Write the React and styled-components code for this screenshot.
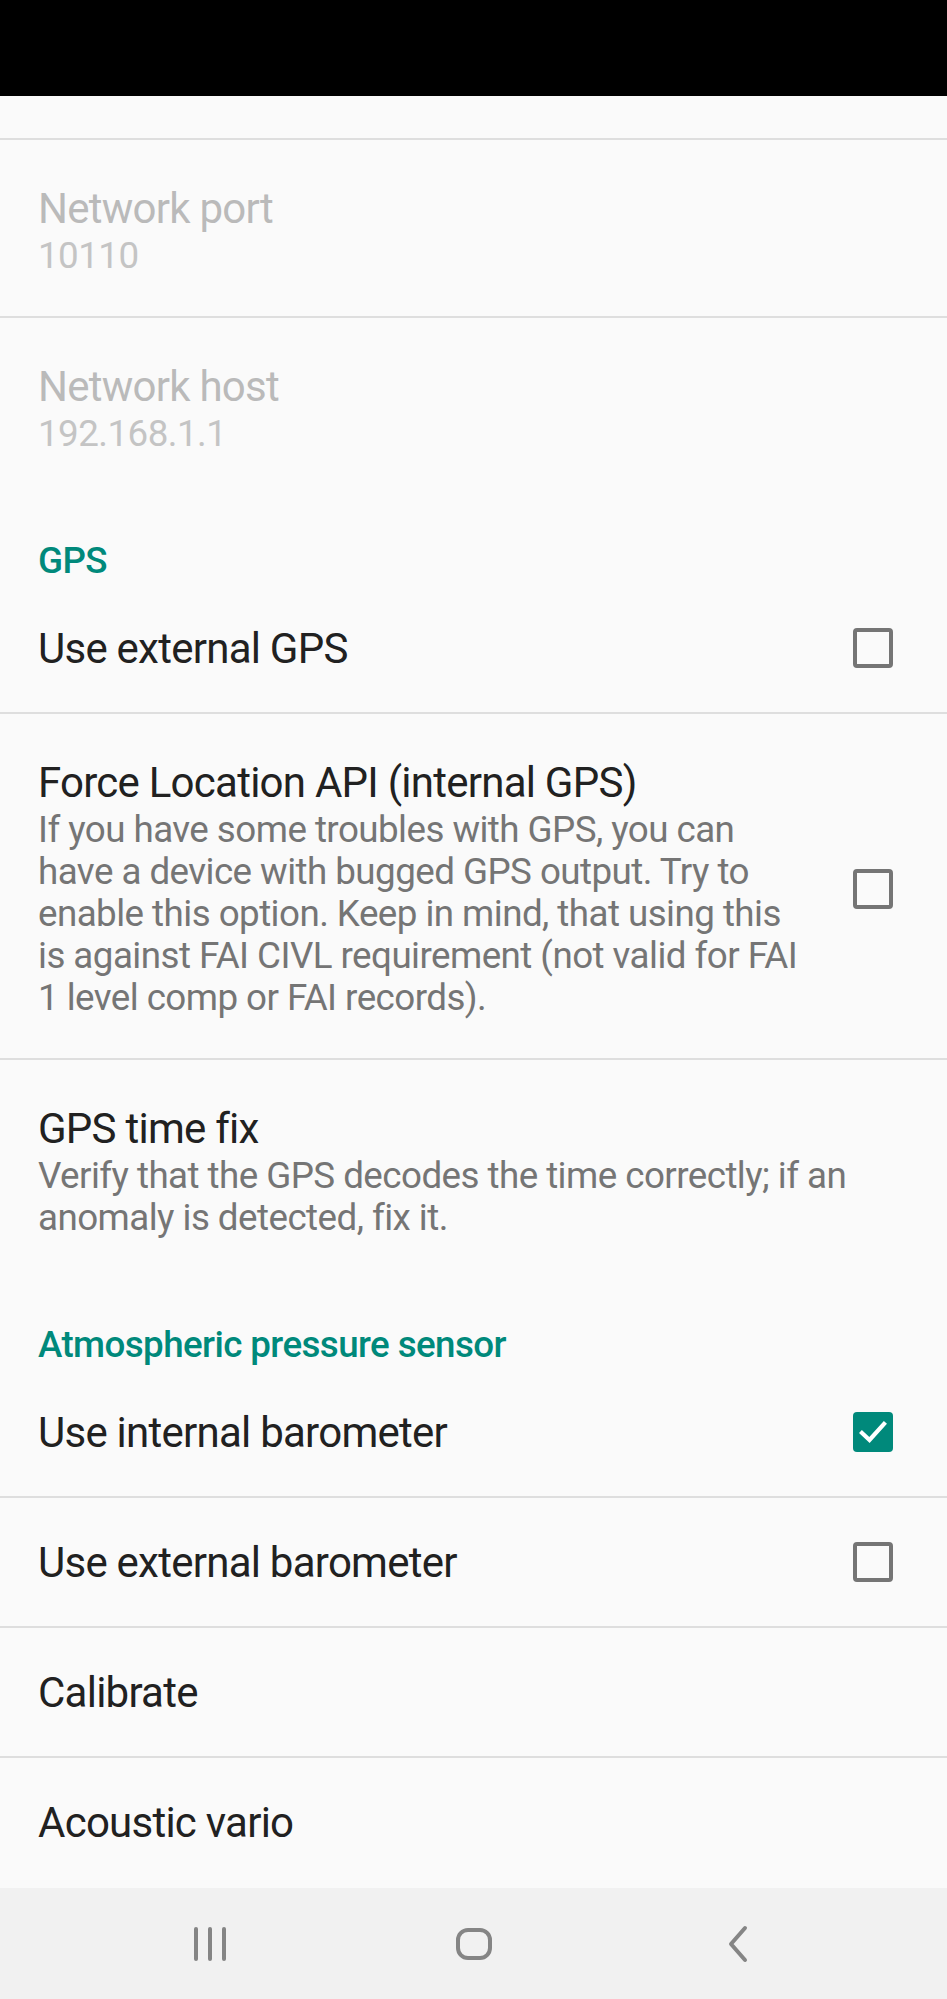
import styled, { createGlobalStyle } from "styled-components";

const GlobalStyle = createGlobalStyle`
  html, body {
    margin: 0;
    padding: 0;
    background: #fafafa;
    font-family: Roboto, "Noto Sans", "Liberation Sans", sans-serif;
  }
`;

const Screen = styled.div`
  width: 947px;
  height: 1999px;
  display: flex;
  flex-direction: column;
  background: #fafafa;
  overflow: hidden;
`;

const StatusBar = styled.div`
  height: 96px;
  background: #000;
  flex-shrink: 0;
`;

const List = styled.div`
  flex: 1;
  display: flex;
  flex-direction: column;
`;

const Tail = styled.div`
  height: 42px;
  border-bottom: 2px solid #dedede;
`;

const Row = styled.div`
  display: flex;
  align-items: center;
  padding: ${({ $tall }) => ($tall ? "44px 54px 39px 38px" : "0 54px 0 38px")};
  height: ${({ $tall }) => ($tall ? "auto" : "128px")};
  border-bottom: ${({ $divider }) => ($divider ? "2px solid #dedede" : "none")};
`;

const Texts = styled.div`
  flex: 1;
  min-width: 0;
`;

const Title = styled.div`
  font-size: 42px;
  line-height: 49px;
  letter-spacing: -0.75px;
  color: ${({ $disabled }) => ($disabled ? "#bababa" : "#212121")};
`;

const Summary = styled.div`
  font-size: 36.75px;
  line-height: 42px;
  letter-spacing: -0.55px;
  margin-top: 2px;
  color: ${({ $disabled }) => ($disabled ? "#c4c4c4" : "#757575")};
`;

const Category = styled.div`
  padding: 46px 38px 2px;
  font-size: 36.75px;
  line-height: 42px;
  letter-spacing: -0.6px;
  font-weight: 500;
  color: #00897b;
`;

const Box = styled.div`
  width: 40px;
  height: 40px;
  box-sizing: border-box;
  margin-left: 46px;
  flex-shrink: 0;
  border-radius: 4px;
  border: ${({ $checked }) => ($checked ? "none" : "4.5px solid #757575")};
  background: ${({ $checked }) => ($checked ? "#00897b" : "transparent")};
  display: flex;
  align-items: center;
  justify-content: center;
`;

const NavBar = styled.div`
  height: 111px;
  flex-shrink: 0;
  background: #f1f1f1;
  display: flex;
  justify-content: center;
  align-items: center;
`;

const NavSlot = styled.div`
  width: 264px;
  display: flex;
  justify-content: center;
  align-items: center;
`;

const Checkbox = ({ checked }) => (
  <Box $checked={checked}>
    {checked && (
      <svg width="40" height="40" viewBox="0 0 40 40">
        <path
          d="M9 21 L16.5 28 L31 12"
          fill="none"
          stroke="#fff"
          strokeWidth="4.2"
          strokeLinecap="square"
        />
      </svg>
    )}
  </Box>
);

const Pref = ({ title, summary, checkbox, checked, disabled, divider }) => (
  <Row $tall={!!summary} $divider={divider}>
    <Texts>
      <Title $disabled={disabled}>{title}</Title>
      {summary && <Summary $disabled={disabled}>{summary}</Summary>}
    </Texts>
    {checkbox && <Checkbox checked={checked} />}
  </Row>
);

const navStroke = "#858585";

export default function App() {
  return (
    <>
      <GlobalStyle />
      <Screen>
        <StatusBar />
        <List>
          <Tail />
          <Pref title="Network port" summary="10110" disabled divider />
          <Pref title="Network host" summary="192.168.1.1" disabled />

          <Category>GPS</Category>
          <Pref title="Use external GPS" checkbox divider />
          <Pref
            title="Force Location API (internal GPS)"
            summary="If you have some troubles with GPS, you can have a device with bugged GPS output. Try to enable this option. Keep in mind, that using this is against FAI CIVL requirement (not valid for FAI 1 level comp or FAI records)."
            checkbox
            divider
          />
          <Pref
            title="GPS time fix"
            summary="Verify that the GPS decodes the time correctly; if an anomaly is detected, fix it."
          />

          <Category>Atmospheric pressure sensor</Category>
          <Pref title="Use internal barometer" checkbox checked divider />
          <Pref title="Use external barometer" checkbox divider />
          <Pref title="Calibrate" divider />
          <Pref title="Acoustic vario" />
        </List>
        <NavBar>
          <NavSlot>
            <svg width="34" height="36" viewBox="0 0 34 36">
              <g stroke={navStroke} strokeWidth="4" strokeLinecap="round">
                <line x1="3" y1="3" x2="3" y2="33" />
                <line x1="17" y1="3" x2="17" y2="33" />
                <line x1="31" y1="3" x2="31" y2="33" />
              </g>
            </svg>
          </NavSlot>
          <NavSlot>
            <svg width="36" height="32" viewBox="0 0 36 32">
              <rect
                x="2"
                y="2"
                width="32"
                height="28"
                rx="10"
                fill="none"
                stroke={navStroke}
                strokeWidth="4"
              />
            </svg>
          </NavSlot>
          <NavSlot>
            <svg width="22" height="38" viewBox="0 0 22 38">
              <path
                d="M18 3 L4 19 L18 35"
                fill="none"
                stroke={navStroke}
                strokeWidth="4"
                strokeLinecap="round"
                strokeLinejoin="round"
              />
            </svg>
          </NavSlot>
        </NavBar>
      </Screen>
    </>
  );
}
